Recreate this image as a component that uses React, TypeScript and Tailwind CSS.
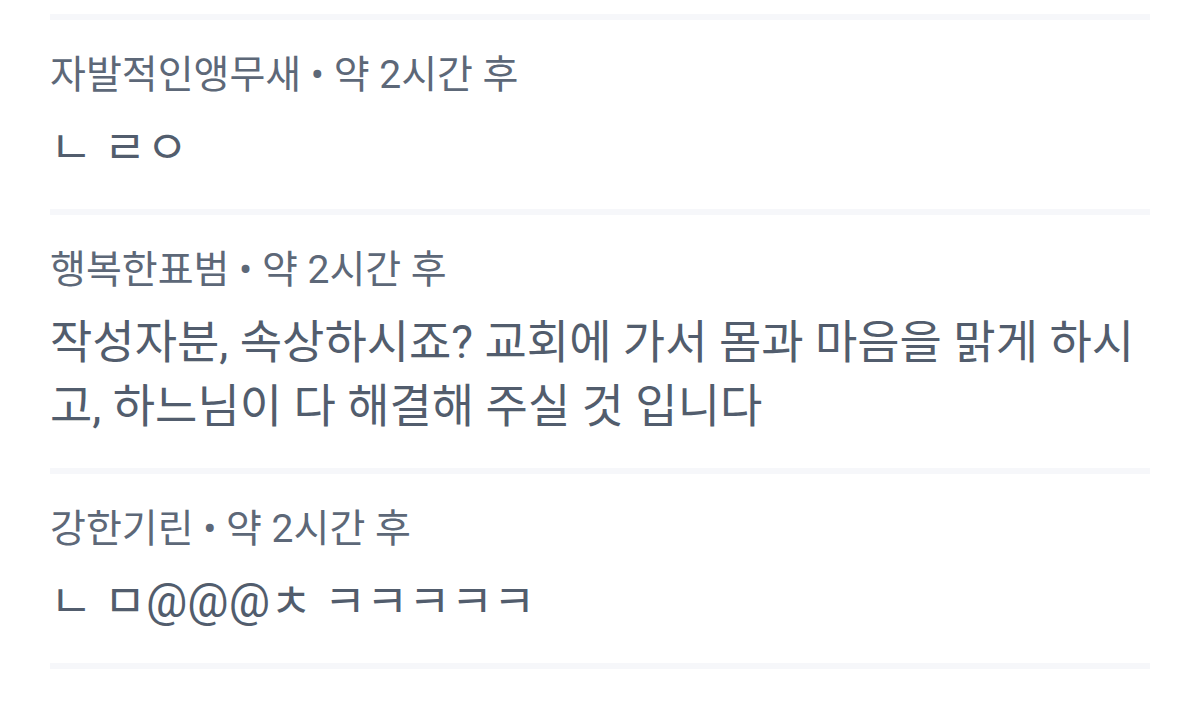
export default function App() {
  const items = [
    { user: "자발적인앵무새", time: "약 2시간 후", body: "ㄴ ㄹㅇ" },
    {
      user: "행복한표범",
      time: "약 2시간 후",
      body: "작성자분, 속상하시죠? 교회에 가서 몸과 마음을 맑게 하시고, 하느님이 다 해결해 주실 것 입니다",
    },
    { user: "강한기린", time: "약 2시간 후", body: "ㄴ ㅁ@@@ㅊ ㅋㅋㅋㅋㅋ" },
  ];
  return (
    <div
      className="w-[1200px] h-[701px] bg-white pt-[14px] overflow-hidden"
      style={{ fontFamily: 'Roboto, "Noto Sans CJK KR", sans-serif' }}
    >
      <div className="mx-[50px]">
        <div className="h-[6px] bg-[#f6f7fa]" />
        {items.map((it, i) => (
          <div key={i}>
            <div className="pt-[33px] pb-[30px]">
              <div className="text-[39px] leading-[44px] text-[#5d6878]">
                {it.user} • {it.time}
              </div>
              <div className="mt-[18px] text-[46px] leading-[64px] text-[#525d6d] break-all">
                {it.body}
              </div>
            </div>
            <div className="h-[6px] bg-[#f6f7fa]" />
          </div>
        ))}
      </div>
    </div>
  );
}
